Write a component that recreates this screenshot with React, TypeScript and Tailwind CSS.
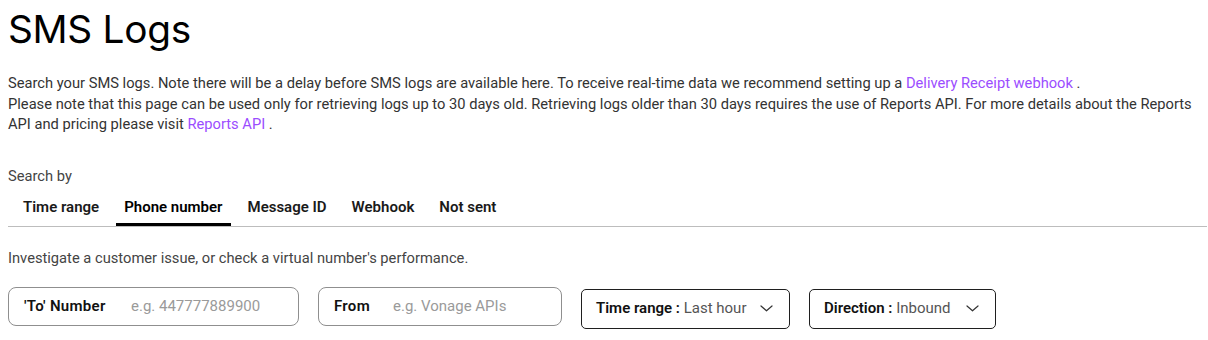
import React from "react"

const tabs = ["Time range", "Phone number", "Message ID", "Webhook", "Not sent"]

const Chevron = () => (
  <svg width="13" height="7" viewBox="0 0 13 7" fill="none" className="text-[#333]">
    <path d="M1 1L6.5 5.8L12 1" stroke="currentColor" strokeWidth="1.2" strokeLinecap="round" strokeLinejoin="round" />
  </svg>
)

export default function App() {
  return (
    <div className="w-[1208px] h-[340px] overflow-hidden bg-white px-2 font-['Roboto',sans-serif] text-[#2b2b2b]">
      <h1 className="pt-[5px] font-['Inter',sans-serif] text-[38.8px] leading-[48px] tracking-[-0.3px] text-black">SMS Logs</h1>

      <div className="mt-[20px] text-[14.7px] leading-[20.5px] text-[#333]">
        <p>
          Search your SMS logs. Note there will be a delay before SMS logs are available here. To receive real-time data we
          recommend setting up a <a className="text-[#9b4dff]">Delivery Receipt webhook</a> .
        </p>
        <p>
          Please note that this page can be used only for retrieving logs up to 30 days old. Retrieving logs older than 30 days
          requires the use of Reports API. For more details about the Reports API and pricing please visit{" "}
          <a className="text-[#9b4dff]">Reports API</a> .
        </p>
      </div>

      <div className="mt-[31px] text-[14.7px] leading-[20px] text-[#444]">Search by</div>

      <div className="-mr-[7px] flex gap-[9px] border-b border-[#bdbdbd] pl-[7px]">
        {tabs.map((t, i) => (
          <div
            key={t}
            className={
              i === 1
                ? "border-b-[3px] border-black px-2 pt-[12px] pb-[6px] text-[15px] font-semibold leading-[19px] text-black"
                : "border-b-[3px] border-transparent px-2 pt-[12px] pb-[6px] text-[15px] font-semibold leading-[19px] text-[#1a1a1a]"
            }
          >
            {t}
          </div>
        ))}
      </div>

      <div className="mt-[21px] text-[14.7px] leading-[20px] text-[#444]">
        Investigate a customer issue, or check a virtual number's performance.
      </div>

      <div className="mt-[19px] flex items-start gap-[19px]">
        <div className="flex h-[39px] w-[291px] items-center rounded-lg border border-[#8f8f8f] pl-[15px] text-[15px]">
          <span className="w-[107px] font-semibold tracking-[0.3px] text-[#111]">'To' Number</span>
          <span className="text-[#9a9a9a]">e.g. 447777889900</span>
        </div>
        <div className="flex h-[39px] w-[244px] items-center rounded-lg border border-[#8f8f8f] pl-[15px] text-[15px]">
          <span className="w-[59px] font-semibold tracking-[0.3px] text-[#111]">From</span>
          <span className="text-[#9a9a9a]">e.g. Vonage APIs</span>
        </div>
        <div className="mt-[2px] flex h-[40px] w-[209px] items-center justify-between rounded-[5px] border border-[#1f1f1f] pl-[14px] pr-[16px] text-[15px]">
          <span>
            <span className="font-semibold text-[#111]">Time range : </span>
            <span className="text-[#555]">Last hour</span>
          </span>
          <Chevron />
        </div>
        <div className="mt-[2px] flex h-[40px] w-[187px] items-center justify-between rounded-[5px] border border-[#1f1f1f] pl-[14px] pr-[16px] text-[15px]">
          <span>
            <span className="font-semibold text-[#111]">Direction : </span>
            <span className="text-[#555]">Inbound</span>
          </span>
          <Chevron />
        </div>
      </div>
    </div>
  )
}
